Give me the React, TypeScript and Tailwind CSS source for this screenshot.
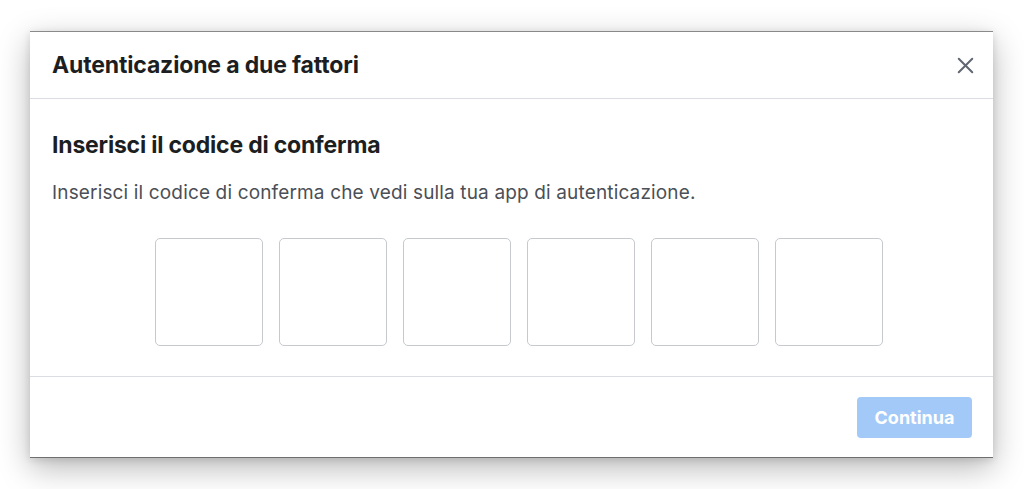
import { X } from "lucide-react";

const boxes = [0, 1, 2, 3, 4, 5];

export default function App() {
  return (
    <div className="w-[1024px] h-[489px] bg-white pt-[31px] pl-[30px] font-['Inter',sans-serif]">
      <div className="w-[963px] h-[427px] bg-white flex flex-col border-t border-b border-t-[#8a8a8a] border-b-[#6f6f6f] shadow-[0_10px_30px_rgba(0,0,0,0.28),0_2px_8px_rgba(0,0,0,0.12)]">
        <div className="h-[67px] flex items-center justify-between pl-[22px] pr-[14px] border-b border-[#dadde1]">
          <h1 className="text-[23px] font-bold text-[#1c1e21] tracking-[-0.15px]">Autenticazione a due fattori</h1>
          <button className="w-7 h-7 flex items-center justify-center text-[#606770]">
            <X size={27} strokeWidth={1.8} />
          </button>
        </div>
        <div className="flex-1 px-[22px] pt-[31px] border-b border-[#dadde1]">
          <h2 className="text-[23px] leading-[30px] font-bold text-[#1c1e21] tracking-[-0.2px]">Inserisci il codice di conferma</h2>
          <p className="mt-[21px] text-[19px] leading-[24px] text-[#4b4f56] tracking-[0.15px]">
            Inserisci il codice di conferma che vedi sulla tua app di autenticazione.
          </p>
          <div className="mt-[33px] flex justify-center gap-[16px] pl-[15px]">
            {boxes.map((b) => (
              <input
                key={b}
                className="w-[108px] h-[108px] rounded-[5px] border-[1.5px] border-[#c6c9ce] outline-none text-center text-[32px]"
              />
            ))}
          </div>
        </div>
        <div className="h-[80px] flex items-center justify-end pr-[21px]">
          <button className="w-[115px] h-[41px] rounded-[4px] bg-[#a3c9f8] text-white text-[18px] font-bold">
            Continua
          </button>
        </div>
      </div>
    </div>
  );
}
